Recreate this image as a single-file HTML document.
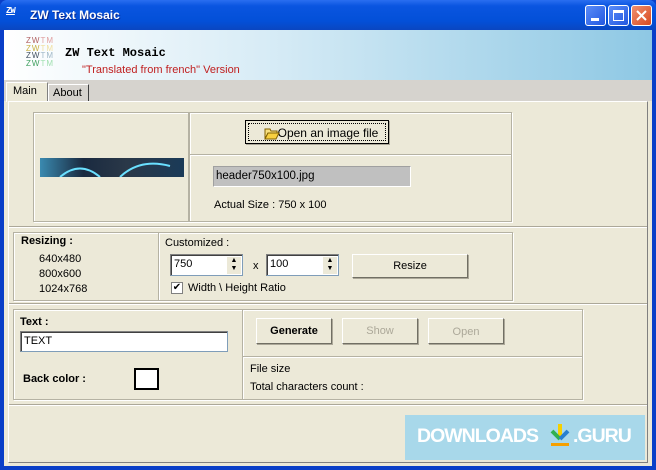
<!DOCTYPE html>
<html><head><meta charset="utf-8"><style>
*{box-sizing:border-box;margin:0;padding:0}
body{width:656px;height:470px;overflow:hidden;background:#0a3fc8;font-family:"Liberation Sans",sans-serif;font-size:11px;color:#000;position:relative}
.abs{position:absolute}
.title{left:0;top:0;width:656px;height:30px;background:linear-gradient(#2a6ef0,#0a55e0 20%,#0350d8 70%,#0a46c0);border-radius:7px 7px 0 0}
.client{left:4px;top:30px;width:648px;height:436px;background:#ece9d8}
.hdr{left:4px;top:30px;width:648px;height:50px;background:linear-gradient(90deg,#fff 0%,#d8ecf6 40%,#8ec8e4 100%)}
.tabbar{left:4px;top:80px;width:648px;height:21px;background:#d6d3ce}
.box{position:absolute;border:1px solid #b5b2a3;box-shadow:inset 1px 1px 0 #fff,1px 1px 0 #fff}
.sep{position:absolute;height:2px;border-top:1px solid #aca899;border-bottom:1px solid #fff}
.btn{position:absolute;background:#ece9d8;border:1px solid #fff;border-right-color:#716f64;border-bottom-color:#716f64;box-shadow:1px 1px 0 #aca899;text-align:center}
.inp{position:absolute;background:#fff;border:1px solid #7f9db9;border-top-color:#808080;border-left-color:#808080;box-shadow:inset 1px 1px 0 #404040;padding-left:3px}
.cap{position:absolute;top:5px;width:21px;height:21px;border:1px solid #fff;border-radius:3px;background:linear-gradient(135deg,#5a8cf8,#2358e0)}
</style></head><body>
<div class="abs title"></div>
<div class="abs" style="left:6px;top:6px;width:20px;height:12px;font:bold 9px 'Liberation Mono',monospace;color:#fff;text-decoration:underline;line-height:10px;letter-spacing:-1px">ZW</div>
<div class="abs" style="left:30px;top:8px;color:#fff;font-weight:bold;font-size:12px;text-shadow:1px 1px 0 #0a2a90">ZW Text Mosaic</div>
<div class="cap" style="left:585px"><div class="abs" style="left:5px;top:12px;width:8px;height:3px;background:#fff"></div></div>
<div class="cap" style="left:608px"><div class="abs" style="left:4px;top:4px;width:11px;height:11px;border:1px solid #fff;border-top-width:3px"></div></div>
<div class="cap" style="left:631px;background:linear-gradient(135deg,#f09070,#d84a20)"><svg class="abs" style="left:3px;top:3px" width="13" height="13"><path d="M2 2L11 11M11 2L2 11" stroke="#fff" stroke-width="2"/></svg></div>
<div class="abs client"></div>
<div class="abs hdr"></div>
<div class="abs" style="left:26px;top:37px;font-size:8px;line-height:7.5px;letter-spacing:1px">
<div style="color:#b06060">ZW<span style="color:#e0a0a0">TM</span></div>
<div style="color:#c8b040">ZW<span style="color:#f0e0a0">TM</span></div>
<div style="color:#405060">ZW<span style="color:#a0b8c8">TM</span></div>
<div style="color:#40a060">ZW<span style="color:#a0e0b0">TM</span></div></div>
<div class="abs" style="left:65px;top:46px;font:bold 12px 'Liberation Mono',monospace">ZW Text Mosaic</div>
<div class="abs" style="left:82px;top:64px;color:#c02020;font-size:11px">"Translated from french" Version</div>
<div class="abs tabbar"></div>
<div class="abs" style="left:6px;top:82px;width:42px;height:20px;background:#ece9d8;border:1px solid #fff;border-bottom:none;border-right-color:#808080;padding:2px 0 0 6px">Main</div>
<div class="abs" style="left:48px;top:84px;width:41px;height:17px;border:1px solid #fff;border-right-color:#404040;border-bottom:none;padding:2px 0 0 4px">About</div>
<div class="abs" style="left:8px;top:101px;width:640px;height:362px;border:1px solid #fff;border-right-color:#808080;border-bottom-color:#808080"></div>
<div class="box" style="left:33px;top:112px;width:156px;height:110px"></div>
<svg class="abs" style="left:40px;top:158px" width="144" height="19"><defs><linearGradient id="g" x1="0" x2="1"><stop offset="0" stop-color="#3a8ab0"/><stop offset=".3" stop-color="#1a2a40"/><stop offset=".6" stop-color="#2a3848"/><stop offset="1" stop-color="#1a3a58"/></linearGradient></defs><rect width="144" height="19" fill="url(#g)"/><path d="M20 19Q40 2 60 19M80 19Q100 0 130 8" stroke="#6ae0ff" stroke-width="2" fill="none"/></svg>
<div class="box" style="left:189px;top:112px;width:323px;height:110px"></div>
<div class="abs" style="left:190px;top:154px;width:321px;height:2px;border-top:1px solid #b5b2a3;border-bottom:1px solid #fff"></div>
<div class="btn" style="left:245px;top:120px;width:144px;height:24px;border:1px solid #000;padding:5px 0 0 22px"><div style="position:absolute;left:2px;top:2px;right:2px;bottom:2px;border:1px dotted #000"></div>
<svg style="position:absolute;left:18px;top:5px" width="16" height="14"><path d="M1 3h5l1 2h6v2H4L1 13z" fill="#f8e080" stroke="#806000"/><path d="M1 13l3-6h11l-3 6z" fill="#f8d040" stroke="#806000"/></svg>
<span style="font-size:12px">Open an image file</span></div>
<div class="abs" style="left:213px;top:166px;width:198px;height:21px;background:#c0c0c0;border:1px solid #fff;border-top-color:#a0a0a0;border-left-color:#a0a0a0;padding:3px 0 0 2px;font-size:11.5px">header750x100.jpg</div>
<div class="abs" style="left:214px;top:199px">Actual Size : 750 x 100</div>
<div class="sep" style="left:9px;top:226px;width:638px"></div>
<div class="box" style="left:13px;top:232px;width:146px;height:69px"></div>
<div class="box" style="left:158px;top:232px;width:355px;height:69px"></div>
<div class="abs" style="left:21px;top:235px;font-weight:bold">Resizing :</div>
<div class="abs" style="left:39px;top:252px;line-height:15px">640x480<br>800x600<br>1024x768</div>
<div class="abs" style="left:165px;top:237px">Customized :</div>
<div class="inp" style="left:170px;top:254px;width:73px;height:22px;padding-top:3px">750</div>
<div class="abs" style="left:227px;top:257px;width:14px;height:17px;background:#ece9d8;font-size:7px;line-height:8px;text-align:center">▲<br>▼</div>
<div class="abs" style="left:253px;top:260px">x</div>
<div class="inp" style="left:266px;top:254px;width:73px;height:22px;padding-top:3px">100</div>
<div class="abs" style="left:323px;top:257px;width:14px;height:17px;background:#ece9d8;font-size:7px;line-height:8px;text-align:center">▲<br>▼</div>
<div class="btn" style="left:352px;top:254px;width:116px;height:24px;padding-top:5px">Resize</div>
<div class="abs" style="left:171px;top:282px;width:12px;height:12px;background:#fff;border:1px solid #808080;font-size:10px;line-height:10px;text-align:center">✔</div>
<div class="abs" style="left:188px;top:282px">Width \ Height Ratio</div>
<div class="sep" style="left:9px;top:303px;width:638px"></div>
<div class="box" style="left:13px;top:309px;width:230px;height:91px"></div>
<div class="box" style="left:242px;top:309px;width:341px;height:91px"></div>
<div class="abs" style="left:243px;top:356px;width:339px;height:2px;border-top:1px solid #b5b2a3;border-bottom:1px solid #fff"></div>
<div class="abs" style="left:20px;top:316px;font-weight:bold">Text :</div>
<div class="inp" style="left:20px;top:331px;width:208px;height:21px;padding-top:3px">TEXT</div>
<div class="abs" style="left:23px;top:373px;font-weight:bold">Back color :</div>
<div class="abs" style="left:134px;top:368px;width:25px;height:22px;background:#fff;border:2px solid #000"></div>
<div class="btn" style="left:256px;top:318px;width:76px;height:26px;padding-top:6px;font-weight:bold">Generate</div>
<div class="btn" style="left:342px;top:318px;width:76px;height:26px;padding-top:6px;color:#aca899">Show</div>
<div class="btn" style="left:428px;top:318px;width:76px;height:26px;padding-top:7px;color:#aca899">Open</div>
<div class="abs" style="left:250px;top:363px">File size</div>
<div class="abs" style="left:250px;top:381px">Total characters count :</div>
<div class="sep" style="left:9px;top:404px;width:638px"></div>
<div class="abs" style="left:405px;top:415px;width:240px;height:45px;background:#a8d8ea"></div>
<div class="abs" style="left:417px;top:425px;color:#fff;font-weight:bold;font-size:19.5px;letter-spacing:-1px">DOWNLOADS</div>
<svg class="abs" style="left:548px;top:421px" width="24" height="28"><path d="M12 3v12" stroke="#f5d000" stroke-width="4"/><path d="M4 10l8 8" stroke="#30b050" stroke-width="4"/><path d="M20 10l-8 8" stroke="#2880d0" stroke-width="4"/><rect x="3" y="22" width="18" height="3" fill="#f5a000"/></svg>
<div class="abs" style="left:573px;top:425px;color:#fff;font-weight:bold;font-size:19.5px;letter-spacing:-1px">.GURU</div>
</body></html>
